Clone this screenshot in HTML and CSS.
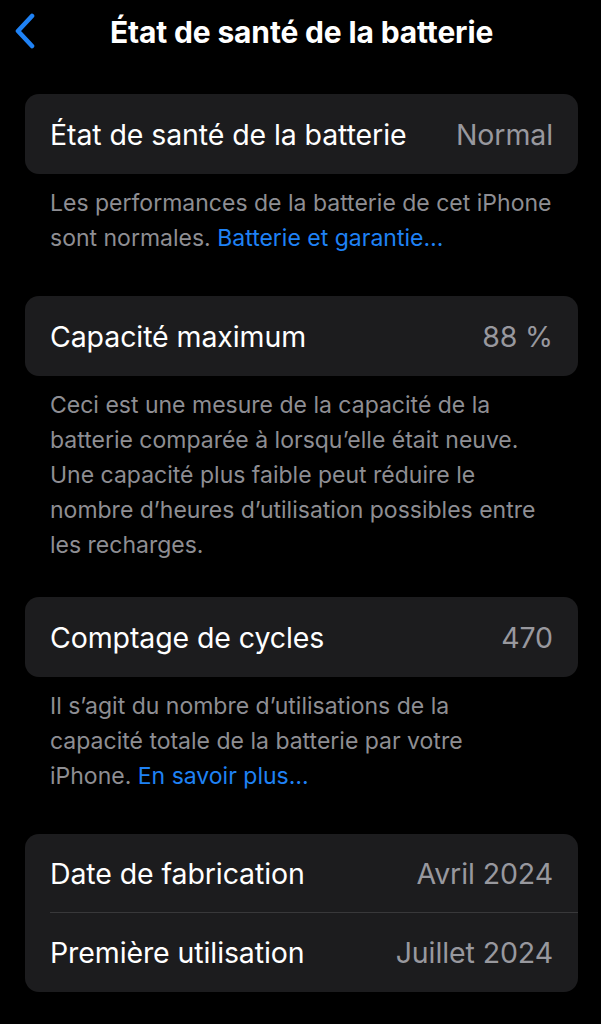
FILE: index.html
```html
<!DOCTYPE html>
<html lang="fr">
<head>
<meta charset="utf-8">
<title>État de santé de la batterie</title>
<link rel="stylesheet" href="styles.css">
</head>
<body>
<div class="screen">
  <header class="nav">
    <svg class="back" viewBox="0 0 24 36" width="24" height="36" aria-hidden="true">
      <path d="M19 3 L5 18 L19 33" fill="none" stroke="#1f82f5" stroke-width="4.6" stroke-linecap="round" stroke-linejoin="round"/>
    </svg>
    <h1 class="title">État de santé de la batterie</h1>
  </header>

  <section class="card">
    <div class="row"><span class="label">État de santé de la batterie</span><span class="value">Normal</span></div>
  </section>
  <p class="foot">Les performances de la batterie de cet iPhone sont normales. <span class="link">Batterie et garantie…</span></p>

  <section class="card">
    <div class="row"><span class="label">Capacité maximum</span><span class="value">88 %</span></div>
  </section>
  <p class="foot foot-tight">Ceci est une mesure de la capacité de la batterie comparée à lorsqu’elle était neuve. Une capacité plus faible peut réduire le nombre d’heures d’utilisation possibles entre les recharges.</p>

  <section class="card">
    <div class="row"><span class="label">Comptage de cycles</span><span class="value">470</span></div>
  </section>
  <p class="foot">Il s’agit du nombre d’utilisations de la<br>capacité totale de la batterie par votre<br>iPhone. <span class="link">En savoir plus…</span></p>

  <section class="card">
    <div class="row"><span class="label">Date de fabrication</span><span class="value">Avril 2024</span></div>
    <div class="row sep"><span class="label">Première utilisation</span><span class="value">Juillet 2024</span></div>
  </section>
</div>
</body>
</html>
```

FILE: styles.css
```css
* { box-sizing: border-box; }
html, body {
  margin: 0;
  padding: 0;
  background: #000;
}
body {
  font-family: Inter, "Noto Sans", "Liberation Sans", sans-serif;
  color: #fff;
  -webkit-font-smoothing: antialiased;
}
.screen {
  width: 601px;
  min-height: 1024px;
  padding: 0 23px 0 25px;
}
.nav {
  position: relative;
  height: 64px;
  display: flex;
  align-items: center;
  justify-content: center;
  margin-bottom: 30px;
}
.back {
  position: absolute;
  left: -12px;
  top: 13px;
}
.title {
  margin: 0;
  font-size: 30px;
  font-weight: 700;
  letter-spacing: -0.15px;
}
.card {
  background: #1c1c1e;
  border-radius: 14px;
  padding-left: 25px;
}
.row {
  height: 80px;
  display: flex;
  align-items: center;
  justify-content: space-between;
  padding-right: 25px;
  font-size: 28.5px;
  letter-spacing: -0.1px;
}
.row.sep {
  border-top: 1px solid #38383a;
}
.card .row:first-child:not(:last-child) { height: 78px; }
.label { color: #fff; }
.value { color: #98989e; }
.foot {
  margin: 0;
  padding: 12px 20px 40px 25px;
  font-size: 23px;
  line-height: 35px;
  color: #8e8e93;
  letter-spacing: 0;
}
.foot-tight { padding-bottom: 34px; }
.link { color: #1f82f5; }
```
